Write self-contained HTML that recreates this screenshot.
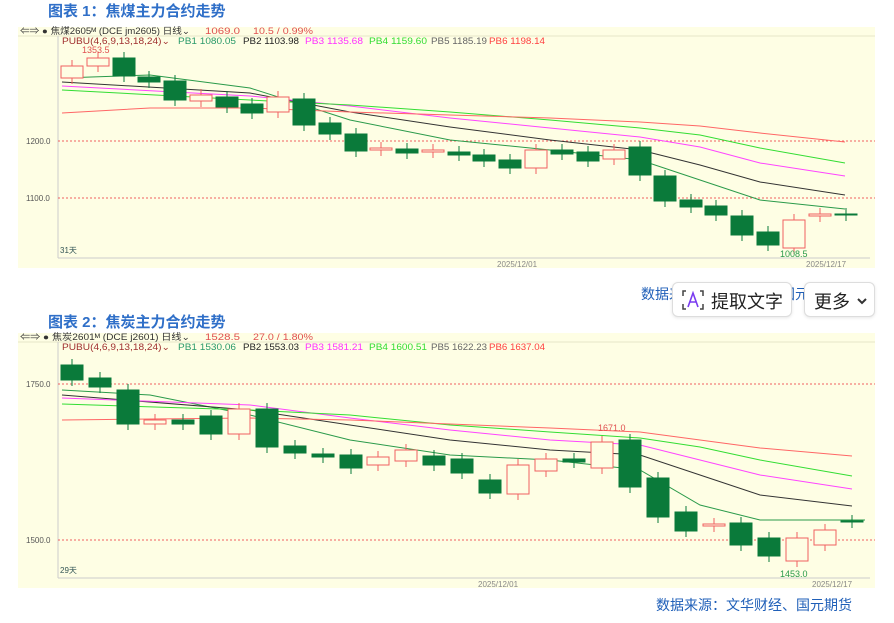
<!DOCTYPE html>
<html><head><meta charset="utf-8"><style>
body{margin:0;width:894px;height:623px;background:#fff;position:relative;overflow:hidden;font-family:"Liberation Sans","Noto Sans CJK SC",sans-serif}
.t{position:absolute;color:#2f6fc8;font-weight:bold;font-size:15px}
.src{position:absolute;color:#1f5fb8;font-size:14px}
.btn{position:absolute;background:#fff;border:1px solid #ddd;border-radius:6px;font-size:18px;color:#222;box-shadow:0 1px 3px rgba(0,0,0,.1)}
</style></head><body>
<div class="t" style="left:48px;top:0px">图表 1：焦煤主力合约走势</div>
<div class="t" style="left:48px;top:311px">图表 2：焦炭主力合约走势</div>
<div class="src" style="left:641px;top:284px">数据来源：文华财经、国元期货</div>
<div class="src" style="left:656px;top:595px">数据来源：文华财经、国元期货</div>
<div class="btn" style="left:672px;top:282px;width:118px;height:33px"><svg width="24" height="24" style="position:absolute;left:8px;top:5px"><path d="M5 3H2V8M2 16V21H5M19 3H22V8M22 16V21H19" fill="none" stroke="#444" stroke-width="1.5"/><path d="M7 19L12 5L17 19M9 14H15" fill="none" stroke="#7a3cf0" stroke-width="1.6"/></svg><span style="position:absolute;left:38px;top:5px">提取文字</span></div>
<div class="btn" style="left:804px;top:282px;width:69px;height:33px"><span style="position:absolute;left:9px;top:5px">更多</span><svg width="10" height="8" style="position:absolute;left:52px;top:14px"><path d="M1 2L5 6L9 2" fill="none" stroke="#333" stroke-width="2"/></svg></div>
<svg id="s" width="894" height="623" style="position:absolute;left:0;top:0;pointer-events:none"></svg>
<script>
var s=document.getElementById('s'),h='';
function chart(y0,y1,bot,name,code,pr,chg,pb,lv,cs,lines,days,hi,lo){
h+=`<rect x="18" y="${y0}" width="857" height="${y1-y0}" fill="#fefee4"/>`;
h+=`<line x1="18" y1="${y0+9}" x2="875" y2="${y0+9}" stroke="#e6e6c8"/>`;
h+=`<line x1="58" y1="${y0+9}" x2="58" y2="${bot}" stroke="#ccc"/><line x1="58" y1="${bot}" x2="870" y2="${bot}" stroke="#ccc"/>`;
h+=`<text x="20" y="${y0+7}" font-size="9" fill="#333" textLength="170" lengthAdjust="spacingAndGlyphs">⇐⇒ ● ${name}ᴹ (DCE ${code})  日线⌄</text><text x="205" y="${y0+7}" font-size="9" fill="#e05050" textLength="35" lengthAdjust="spacingAndGlyphs">${pr}</text><text x="253" y="${y0+7}" font-size="9" fill="#e05050" textLength="60" lengthAdjust="spacingAndGlyphs">${chg}</text>`;
var cols=['#a03030','#2a9a6a','#222','#ff33ff','#33dd33','#666','#ff4040'];var px=[62,178,243,305,369,431,489],pw=[108,58,56,58,58,56,56];
pb.forEach((t,i)=>{h+=`<text x="${px[i]}" y="${y0+17}" font-size="9" fill="${cols[i]}" textLength="${pw[i]}" lengthAdjust="spacingAndGlyphs">${t}</text>`;});
lv.forEach(l=>{h+=`<line x1="58" y1="${l[1]}" x2="875" y2="${l[1]}" stroke="#f06060" stroke-dasharray="2,2"/><text x="26" y="${l[1]+3}" font-size="8" fill="#555">${l[0]}</text>`;});
var lc=['#2a9a4a','#333','#ff44ff','#33dd33','#ff6666'];
lines.forEach((p,i)=>{h+=`<polyline points="${p}" fill="none" stroke="${lc[i]}" stroke-width="1"/>`;});
cs.forEach(c=>{var x=c[0],a=c[1],b=c[2],g=c[3];var col=g?'#0a7a3a':'#f06060';
h+=`<line x1="${x}" y1="${a-6}" x2="${x}" y2="${b+6}" stroke="${col}"/>`;
h+=`<rect x="${x-11}" y="${a}" width="22" height="${Math.max(b-a,1)}" fill="${g?'#0a7a3a':'#fefee4'}" stroke="${col}"/>`;});
h+=`<text x="60" y="${bot-5}" font-size="8" fill="#355">${days}</text>`;
h+=`<text x="${hi[0]}" y="${hi[1]}" font-size="9" fill="#e05050">${hi[2]}</text><text x="${lo[0]}" y="${lo[1]}" font-size="9" fill="#2a9a4a">${lo[2]}</text>`;
h+=`<text x="${cs.length>30?497:478}" y="${bot+9}" font-size="8" fill="#888">2025/12/01</text><text x="${cs.length>30?806:812}" y="${bot+9}" font-size="8" fill="#888">2025/12/17</text>`;
}
chart(27,268,258,'焦煤2605','jm2605','1069.0','10.5 / 0.99%',['PUBU(4,6,9,13,18,24)⌄','PB1 1080.05','PB2 1103.98','PB3 1135.68','PB4 1159.60','PB5 1185.19','PB6 1198.14'],[['1200.0',141],['1100.0',198]],
[[72,66,78,0],[98,58,66,0],[124,58,76,1],[149,77,82,1],[175,81,100,1],[201,95,101,0],[227,97,107,1],[252,104,113,1],[278,97,112,0],[304,99,125,1],[330,123,134,1],[356,134,151,1],[381,148,150,0],[407,149,153,1],[433,150,152,0],[459,152,155,1],[484,155,161,1],[510,160,168,1],[536,150,168,0],[562,150,154,1],[588,152,161,1],[614,150,159,0],[640,147,175,1],[665,176,201,1],[691,200,207,1],[716,206,215,1],[742,216,235,1],[768,232,245,1],[794,220,248,0],[820,214,216,0],[846,214,215,1]],
['62,78 150,75 250,88 350,120 450,140 550,150 640,160 700,180 760,200 845,209','62,82 250,93 350,112 450,127 550,140 640,150 700,165 760,182 845,195','62,86 250,96 350,106 450,118 550,128 640,137 700,147 760,163 845,176','62,90 250,100 350,105 450,112 550,120 640,128 700,135 760,148 845,163','62,113 150,108 250,108 350,112 450,115 550,118 640,122 700,126 760,133 845,142'],'31天',[82,53,'1353.5'],[780,257,'1008.5']);
chart(333,588,578,'焦炭2601','j2601','1528.5','27.0 / 1.80%',['PUBU(4,6,9,13,18,24)⌄','PB1 1530.06','PB2 1553.03','PB3 1581.21','PB4 1600.51','PB5 1622.23','PB6 1637.04'],[['1750.0',384],['1500.0',540]],
[[72,365,380,1],[100,378,387,1],[128,390,424,1],[155,420,424,0],[183,420,424,1],[211,416,434,1],[239,409,434,0],[267,409,447,1],[295,446,453,1],[323,454,457,1],[351,455,468,1],[378,457,465,0],[406,450,461,0],[434,456,465,1],[462,459,473,1],[490,480,493,1],[518,465,494,0],[546,459,471,0],[574,459,462,1],[602,442,468,0],[630,440,487,1],[658,478,517,1],[686,512,531,1],[714,524,526,0],[741,523,545,1],[769,538,556,1],[797,538,561,0],[825,530,545,0],[852,521,522,1]],
['62,390 150,395 250,415 350,440 450,455 550,460 640,470 700,505 760,520 865,520','62,395 250,410 350,425 450,440 550,450 640,455 700,475 760,495 852,506','62,398 250,405 350,418 450,430 550,440 640,445 700,460 760,475 852,489','62,404 250,410 350,415 450,425 550,432 640,438 700,447 760,460 852,476','62,420 250,418 350,420 450,424 550,428 640,432 700,440 760,448 852,456'],'29天',[598,431,'1671.0'],[780,577,'1453.0']);
s.innerHTML=h;
</script>
</body></html>
